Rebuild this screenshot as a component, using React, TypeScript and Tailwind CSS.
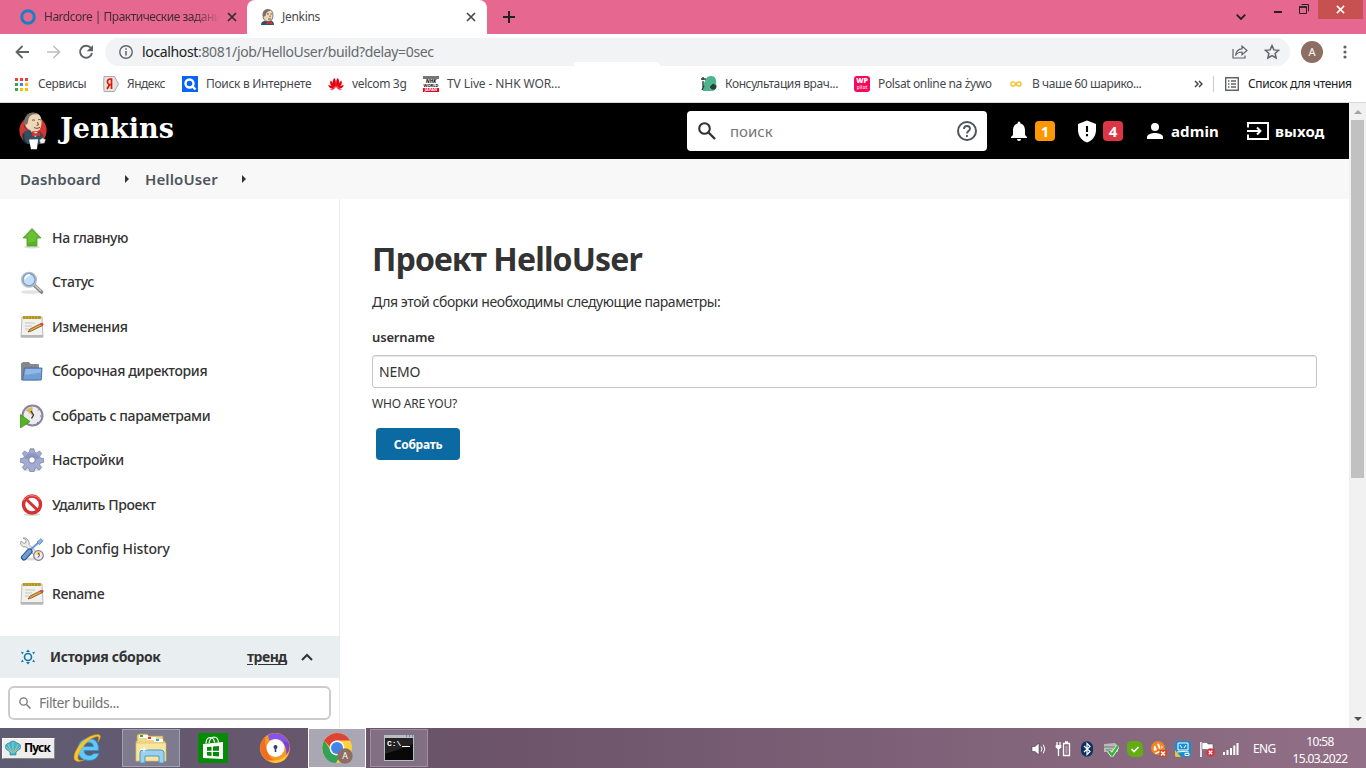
import React from "react";

type P = { className?: string };

const Butler = ({ className = "" }: P) => (
  <svg viewBox="0 0 28 38" className={className}>
    <ellipse cx="14" cy="18.500" rx="13.600" ry="14" fill="#d33833" />
    <path d="M6 12C5 6 8 1 14 .8c6-.3 9 4 8.500 10-.4 6-2 8.500-6 8.500-6 .5-9.500-3-10.500-7.300Z" fill="#f0d6b7" />
    <path d="M5.500 13C4 6 8 1 13 .7c3 0 5 .6 6.500 1.800-3-.6-6-.5-8 1.200-2.500 2-2 5-3 8-1 1-2 1-3 1.300Z" fill="#77706b" />
    <path d="M5.500 13c0 3 1 4 3 4" stroke="#443a35" strokeWidth=".8" fill="none" />
    <path d="M13 8.500c1-.8 2-.8 3 0M19 8c1-.7 2-.6 2.800 0M18.500 10l1 3-2 .3M15 15.500c2 1.200 4 1 6-.2" stroke="#4b3b31" strokeWidth=".9" fill="none" />
    <path d="M5 19.500 10 17.500l5 4 6-2 3 3 .5 7-5 3-12-1L4 26Z" fill="#335061" />
    <path d="m11.500 18.500 3 2 4-.5.5 3-3 2Z" fill="#fff" />
    <path d="m13 20 3.500 1.700L21 20l.5 4.500-5-1.200-4 1.700Z" fill="#d33833" stroke="#7c211e" strokeWidth=".5" />
    <path d="M4.500 21.500Q3.500 27 7 31" stroke="#1d3440" strokeWidth="1.800" fill="none" />
    <path d="m10 27.500 9-.3-1 10h-6Z" fill="#fff" />
    <path d="m20.500 28 3-2 3 1.500-1 3.500-4 .7Z" fill="#eee" stroke="#777" strokeWidth=".5" />
  </svg>
);

const Cross = ({ className = "" }: P) => (
  <svg viewBox="0 0 10 10" className={className}>
    <path d="m1 1 8 8M9 1 1 9" stroke="currentColor" strokeWidth="1.700" fill="none" />
  </svg>
);

function TabStrip() {
  return (
    <div className="flex h-[34px] bg-[#e66891] text-[12px] leading-4 text-[#2f2a2d]">
      <div className="flex h-[34px] w-[247px] shrink-0 items-center pl-5">
        <svg viewBox="0 0 16 16" className="size-4 shrink-0">
          <circle cx="8" cy="8" r="6.300" fill="none" stroke="#1680c3" strokeWidth="3" />
        </svg>
        <span className="ml-2 w-[176px] whitespace-nowrap bg-linear-to-r from-[#402a34] from-85% to-[#e66891] bg-clip-text tracking-[-0.5px] text-transparent">
          Hardcore | Практические задани
        </span>
        <Cross className="ml-[7px] size-[10px]" />
      </div>
      <div className="flex w-[240px] shrink-0 items-center rounded-t-lg bg-white pl-[13px]">
        <svg viewBox="0 0 16 16" className="h-4 w-4 shrink-0">
          <path d="M1 16q0-4 4-4l5-1q4 1 4 5Z" fill="#335061" />
          <path d="M3 6q0-5.500 5-5.500T13 6q0 6.500-5 6.500T3 6Z" fill="#f0d6b7" stroke="#5c5048" strokeWidth=".7" />
          <path d="M3 8Q1.500 1 7.500.5q2 0 3.500 1Q6 2 5.500 7Z" fill="#77706b" />
          <path d="M7 5h2M10.500 5H12M10 6.500v1.500M8 10h3" stroke="#4b3b31" strokeWidth=".8" />
          <path d="m6.500 12.500 2.500 1 3-1v3l-3-1-2.500 1Z" fill="#d33833" />
        </svg>
        <span className="ml-[6px] w-[184px] tracking-[-0.3px] text-[#45484c]">Jenkins</span>
        <Cross className="size-[10px] text-[#45484c]" />
      </div>
      <div className="flex flex-1 items-start">
        <svg viewBox="0 0 12 12" className="ml-4 mt-[11px] size-3">
          <path d="M6 0v12M0 6h12" stroke="#222" strokeWidth="2" />
        </svg>
        <svg viewBox="0 0 10 6" className="ml-[721px] mt-[14px] h-[6px] w-[10px]">
          <path d="m.7.7 4.300 4.300L9.300.7" stroke="#222" strokeWidth="1.800" fill="none" />
        </svg>
        <svg viewBox="0 0 8 3" className="ml-[28px] mt-[11px] h-[3px] w-2">
          <path d="M0 0h8v2H0z" fill="#222" />
        </svg>
        <svg viewBox="0 0 10 10" className="ml-[17px] mt-1 size-[10px]">
          <path d="M.5 3h7v6.500h-7zM2.500.5h7v7" stroke="#222" fill="none" />
          <path d="M0 3h8" stroke="#222" strokeWidth="1.600" />
        </svg>
        <div className="ml-[9px] flex h-[19px] w-[45px] items-center justify-center bg-[#c75050] text-white">
          <Cross className="size-[9px]" />
        </div>
      </div>
    </div>
  );
}

function Toolbar() {
  return (
    <div className="flex h-[35px] items-center pt-px">
      <svg viewBox="0 0 14 14" className="ml-[15px] size-[14px]">
        <path d="M14 7H1.500M7.500 1l-6 6 6 6" stroke="#5f6368" strokeWidth="1.800" fill="none" />
      </svg>
      <svg viewBox="0 0 14 14" className="ml-[18px] size-[14px]">
        <path d="M0 7h12.500M6.500 1l6 6-6 6" stroke="#bcbec1" strokeWidth="1.600" fill="none" />
      </svg>
      <svg viewBox="0 0 16 16" className="ml-[17px] size-4">
        <path d="M13 4.300A6 6 0 1 0 14 9" stroke="#5f6368" strokeWidth="1.900" fill="none" />
        <path d="M15 1v6.300H8.700Z" fill="#5f6368" />
      </svg>
      <div className="relative ml-[11px] flex h-7 w-[1185px] items-center rounded-full bg-[#f1f3f4] pl-[14px]">
        <svg viewBox="0 0 14 14" className="size-[14px]">
          <circle cx="7" cy="7" r="6.200" stroke="#5f6368" strokeWidth="1.400" fill="none" />
          <path d="M7 6v4.500M7 3.300v1.500" stroke="#5f6368" strokeWidth="1.500" />
        </svg>
        <span className="ml-[9px] w-[1090px] whitespace-nowrap text-[14px] leading-5 tracking-[-0.35px] text-[#676a6e]">
          <span className="text-[#202124]">localhost</span>:8081/job/HelloUser/build?delay=0sec
        </span>
        <svg viewBox="0 0 16 16" className="size-4">
          <path d="M1 5v9h12v-2.500M3.500 11.500C4 7 6 5 10 4.800V2l5 4.500-5 4.300V8C7 8 5 9 3.500 11.500Z" stroke="#5f6368" strokeWidth="1.200" fill="none" />
        </svg>
        <svg viewBox="0 0 16 16" className="ml-4 size-4">
          <path d="m8 1.600 1.900 4.300 4.700.4-3.500 3.100 1 4.600L8 11.600 3.900 14l1-4.600-3.500-3.100 4.700-.4Z" stroke="#5f6368" strokeWidth="1.500" fill="none" />
        </svg>
        <div className="absolute bottom-0 left-[469px] h-1 w-[86px] rounded-tr-full bg-white" />
      </div>
      <div className="ml-[11px] flex size-[22px] items-center justify-center rounded-full bg-[#8d6e63] text-[11px] text-white">A</div>
      <svg viewBox="0 0 4 16" className="ml-[20px] h-4 w-1">
        <circle cx="2" cy="3" r="1.600" fill="#5f6368" />
        <circle cx="2" cy="8" r="1.600" fill="#5f6368" />
        <circle cx="2" cy="13" r="1.600" fill="#5f6368" />
      </svg>
    </div>
  );
}

function Bookmarks() {
  const colors = ["#ea4335", "#ea4335", "#ea4335", "#34a853", "#4285f4", "#fbbc05", "#34a853", "#fbbc05", "#fbbc05"];
  return (
    <div className="flex h-[34px] items-center whitespace-nowrap border-b border-[#d5d7d9] pb-[3px] text-[12px] text-[#45484d]">
      <div className="flex w-[103px] items-center pl-[15px]">
        <svg viewBox="0 0 13 13" className="mr-[10px] size-[13px]">
          {colors.map((c, i) => (
            <rect key={i} x={(i % 3) * 5} y={Math.floor(i / 3) * 5} width="3" height="3" fill={c} />
          ))}
        </svg>
        <span className="tracking-[-0.35px]">Сервисы</span>
      </div>
      <div className="flex w-[79px] items-center">
        <svg viewBox="0 0 16 16" className="mr-2 size-4">
          <path d="M1 .5h10.500L15.500 8l-4 7.500H1q-.7-7.500 0-15Z" fill="#e5e5e5" stroke="#aaa" />
          <path d="M8.500 13V3H7Q4.500 3 4.500 6q0 2 2 2.700L4 13M8.500 8.700h-2" stroke="#e61400" strokeWidth="1.700" fill="none" />
        </svg>
        <span className="tracking-[-0.5px]">Яндекс</span>
      </div>
      <div className="flex w-[146px] items-center">
        <svg viewBox="0 0 16 16" className="mr-2 size-4">
          <path d="M0 0h16v16H0z" fill="#0b63f6" />
          <circle cx="7.500" cy="7.500" r="4" fill="none" stroke="#fff" strokeWidth="2.400" />
          <path d="m10.500 10.500 3 3" stroke="#fff" strokeWidth="2.400" />
        </svg>
        <span className="tracking-[-0.3px]">Поиск в Интернете</span>
      </div>
      <div className="flex w-[95px] items-center">
        <svg viewBox="0 0 16 16" className="mr-2 size-4" fill="#e60012">
          <path d="M7.700 12C4 7 4 4 6.700 2q1.800 3 1 10ZM8.300 12C12 7 12 4 9.300 2q-1.800 3-1 10ZM7 12.500C2 10 1.500 7 2.700 4.500Q5.800 7 7 12.500ZM9 12.500c5-2.500 5.500-5.500 4.300-8Q10.200 7 9 12.500ZM6.700 13Q1 13 .2 8.700q4 .8 6.500 4.300ZM9.300 13q5.700 0 6.500-4.300-4 .8-6.500 4.300ZM6.500 13.500q-3 1.500-4.800 0ZM9.500 13.500q3 1.500 4.800 0Z" />
        </svg>
        <span className="tracking-[-0.35px]">velcom 3g</span>
      </div>
      <div className="flex w-[278px] items-center">
        <div className="mr-2 flex size-4 flex-col overflow-hidden text-center text-[4px] font-bold leading-[4px]">
          <span className="h-[3px] bg-[#777]" />
          <span className="h-[5px] text-[5px] italic leading-[5px] text-black">NHK</span>
          <span className="h-1 text-black">WORLD</span>
          <span className="h-1 bg-[#e60022] text-white">JAPAN</span>
        </div>
        <span className="tracking-[-0.1px]">TV Live - NHK WOR...</span>
      </div>
      <div className="flex w-[153px] items-center">
        <svg viewBox="0 0 16 16" className="mr-2 size-4">
          <path d="M5 3q1-3 5-3 6 0 5 8 2 5-3 7H2Q1 9 5 3Z" fill="#4cb58e" />
          <path d="M2 1v3M0 3h5M2 5v7M1 14l2-4" stroke="#28423a" strokeWidth="1.400" />
          <path d="M9 11l3-3 3 2-1 3h-3Z" fill="#28423a" stroke="#28423a" />
        </svg>
        <span className="tracking-[-0.38px]">Консультация врач...</span>
      </div>
      <div className="flex w-[154px] items-center">
        <div className="mr-2 flex size-4 flex-col items-center justify-center rounded-[3px] bg-[#f5095c] text-white">
          <span className="text-[7px] font-black leading-[6px]">WP</span>
          <span className="text-[5px] leading-[6px]">pilot</span>
        </div>
        <span className="tracking-[-0.37px]">Polsat online na żywo</span>
      </div>
      <div className="flex w-[186px] items-center">
        <svg viewBox="0 0 16 16" className="mr-2 size-4">
          <path d="M8 8Q6 5.500 4.500 5.800 3 6 3 8t1.500 2.200Q6 10.500 8 8q2-2.500 3.500-2.200Q13 6 13 8t-1.500 2.200Q10 10.500 8 8Z" stroke="#f4c430" strokeWidth="1.600" fill="none" />
        </svg>
        <span className="tracking-[-0.4px]">В чаше 60 шарико...</span>
      </div>
      <svg viewBox="0 0 9 8" className="h-2 w-[9px]">
        <path d="m1 1 3 3-3 3M5 1l3 3-3 3" stroke="#45484d" strokeWidth="1.500" fill="none" />
      </svg>
      <div className="ml-[10px] h-4 w-px bg-[#c8cacc]" />
      <svg viewBox="0 0 14 14" className="ml-[11px] size-[14px]">
        <path d="M.7.700h12.600v12.600H.7zM3 4h1.500M6 4h5M3 7h1.500M6 7h5M3 10h1.500M6 10h5" stroke="#5f6368" strokeWidth="1.400" fill="none" />
      </svg>
      <span className="ml-[9px] tracking-[-0.4px] text-[#202124]">Список для чтения</span>
    </div>
  );
}

function Header() {
  return (
    <header className="flex h-14 items-center bg-black text-white">
      <Butler className="ml-[19px] h-[38px] w-7" />
      <span className="ml-[13px] w-[627px] -translate-y-[2px] font-['DejaVu_Serif',serif] text-[27px] font-bold tracking-[0.1px]">Jenkins</span>
      <div className="flex h-10 w-[300px] items-center rounded-[4px] bg-white">
        <svg viewBox="0 0 18 18" className="ml-[11px] size-[18px]">
          <circle cx="6.500" cy="6.500" r="5.300" stroke="#333" strokeWidth="2.100" fill="none" />
          <path d="m10.500 10.500 6.500 6.500" stroke="#333" strokeWidth="2.400" />
        </svg>
        <span className="ml-[14px] w-[227px] text-[15px] text-[#757575]">поиск</span>
        <svg viewBox="0 0 20 20" className="size-5">
          <circle cx="10" cy="10" r="9" stroke="#4d545d" strokeWidth="2" fill="none" />
          <path d="M7 8q0-3 3-3t3 2.700C13 10 10 10 10 12.500M10 14v2" stroke="#4d545d" strokeWidth="1.800" fill="none" />
        </svg>
      </div>
      <svg viewBox="0 0 18 20" className="ml-[23px] h-5 w-[18px]" fill="#fff">
        <path d="M9 20q2 0 2-2H7q0 2 2 2ZM15 14V9c0-3.200-1.700-5.700-4.600-6.400V2Q10.400.5 9 .5T7.600 2v.6C4.700 3.300 3 5.800 3 9v5l-2 2v1h16v-1Z" />
      </svg>
      <span className="ml-[7px] flex h-5 w-5 items-center justify-center rounded-[4px] bg-[#fe9700] text-[15px] font-bold">1</span>
      <svg viewBox="0 0 20 23" className="ml-[22px] h-[23px] w-5">
        <path d="M10 .5 1 4v6c0 6 4 11 9 12.500 5-1.500 9-6.500 9-12.500V4Z" fill="#fff" />
        <path d="M10 6v6M10 14v2.200" stroke="#000" strokeWidth="2.100" />
      </svg>
      <span className="ml-[6px] flex h-5 w-5 items-center justify-center rounded-[4px] bg-[#dc3545] text-[15px] font-bold">4</span>
      <svg viewBox="0 0 16 16" className="ml-6 size-4" fill="#fff">
        <circle cx="8" cy="4" r="4" />
        <path d="M0 16v-2c0-2.700 5.300-4 8-4s8 1.300 8 4v2Z" />
      </svg>
      <span className="ml-2 w-[76px] text-[15px] font-bold tracking-[0.1px]">admin</span>
      <svg viewBox="0 0 22 18" className="h-[18px] w-[22px]">
        <path d="M1 5.500V1h20v16H1v-4.500M0 9h13M10 5.500 13.500 9 10 12.500" stroke="#fff" strokeWidth="1.900" fill="none" />
      </svg>
      <span className="ml-[6px] text-[15px] font-bold tracking-[0.1px]">выход</span>
    </header>
  );
}

const Notepad = () => (
  <>
    <path d="M2 2h20l1 20H1Z" fill="#f1f1ee" stroke="#aaa" strokeWidth=".8" />
    <path d="M1 20h22v2.500H1Z" fill="#b7b7b5" />
    <path d="M3 1h18v3H3Z" fill="#c8a832" />
    <path d="M4 1v3M7 1v3M10 1v3M13 1v3M16 1v3M19 1v3" stroke="#8a7015" strokeWidth=".7" />
    <path d="M5 8h10M5 11h7M5 14h4" stroke="#c5c5c5" />
    <path d="m8 17 2-3 11-5.500 1.500 2-11 5.500Z" fill="#e3a13a" stroke="#6b451c" strokeWidth=".7" />
    <path d="m20 9 2-1.300q2 .5 1.500 2l-2 1.500Z" fill="#d84444" />
  </>
);

const menu: { label: string; track: string; icon: React.ReactNode }[] = [
  {
    label: "На главную",
    track: "tracking-[-0.38px]",
    icon: (
      <>
        <ellipse cx="12" cy="21" rx="8" ry="1.500" fill="#ddd" />
        <path d="m12 2.500 9 9.500h-4v8H7v-8H3Z" fill="#55b51f" stroke="#579b35" strokeWidth=".8" />
        <path d="m12 4 6.500 7H16v4L8 17v-6H5.500Z" fill="#79c84a" opacity=".6" />
      </>
    ),
  },
  {
    label: "Статус",
    track: "tracking-[-0.35px]",
    icon: (
      <>
        <ellipse cx="11" cy="21" rx="10" ry="1.800" fill="#e2e2e2" />
        <path d="m14.500 14.500 7 6.500" stroke="#888" strokeWidth="3.600" strokeLinecap="round" />
        <path d="m15 14.500 6 5.500" stroke="#ccc" strokeWidth="1.500" />
        <circle cx="9" cy="8.700" r="7.300" fill="#b8d6f5" stroke="#bbb" strokeWidth="1.500" />
        <circle cx="9" cy="8.700" r="6" fill="#c4defa" stroke="#6f9bd0" strokeWidth="1.200" />
        <path d="M5 8q1-4 5-4" stroke="#fff" strokeWidth="2" fill="none" />
      </>
    ),
  },
  { label: "Изменения", track: "tracking-[-0.4px]", icon: <Notepad /> },
  {
    label: "Сборочная директория",
    track: "tracking-[-0.35px]",
    icon: (
      <>
        <path d="M1.500 20V3.500L3 2.500h6l1.500 2h8V20Z" fill="#85878a" stroke="#666" strokeWidth=".6" />
        <path d="M4.500 8H22l-.7 12H2.500Z" fill="#6f9fd5" stroke="#3f6ea8" strokeWidth=".9" />
        <path d="M5.500 9H21l-.2 3.500L5 15Z" fill="#91b8e3" />
      </>
    ),
  },
  {
    label: "Собрать с параметрами",
    track: "tracking-[-0.38px]",
    icon: (
      <>
        <circle cx="12.500" cy="11.500" r="10" fill="#ecebef" stroke="#8884a0" strokeWidth="2" />
        <path d="M12.500 11.500 6 6.500q2-3 6.500-3.500Z" fill="#d7b955" />
        <path d="m11 7 2.500 4-2 3.500" stroke="#333" strokeWidth="1.300" fill="none" />
        <path d="M18 6.500 19.500 5M20 12h1.500M17 18l1.500 1.500" stroke="#777" />
        <path d="M.5 10.500 10 17.500.5 24Z" fill="#53b51f" stroke="#358515" strokeWidth=".7" />
      </>
    ),
  },
  {
    label: "Настройки",
    track: "tracking-[-0.35px]",
    icon: (
      <>
        <ellipse cx="12" cy="22" rx="9" ry="1.300" fill="#ddd" />
        <path
          d="m10 .8 4 0 .7 3.400 1.700.8 3-2 2.300 2.300-2 3 .8 1.700 3.400.7v3.500l-3.400.7-.8 1.800 2 2.800-2.400 2.500-2.900-2-1.700.7-.7 3.200h-4l-.7-3.200-1.700-.7-2.900 2-2.400-2.500 2-2.800-.8-1.800-3.400-.7v-3.500l3.400-.7.8-1.700-2-3L4.600 3l3 2 1.700-.8Z"
          fill="#a3abd0"
          stroke="#767ea5"
          strokeWidth=".7"
        />
        <path d="M5 8q7-6 14 0v3H5Z" fill="#7586b1" opacity=".5" />
        <circle cx="12" cy="12" r="3.300" fill="#fff" stroke="#767da5" />
      </>
    ),
  },
  {
    label: "Удалить Проект",
    track: "tracking-[-0.4px]",
    icon: (
      <>
        <ellipse cx="12" cy="21.500" rx="8" ry="1.500" fill="#d5d5d5" />
        <circle cx="12" cy="11.500" r="8.500" fill="#fff" stroke="#d63232" strokeWidth="3.400" />
        <path d="m6.500 6.500 11 10.500" stroke="#d63232" strokeWidth="3" />
        <path d="M3.500 8q2-5 8.500-5.500 5 0 8 4" stroke="#f08080" fill="none" />
      </>
    ),
  },
  {
    label: "Job Config History",
    track: "tracking-[-0.15px]",
    icon: (
      <>
        <ellipse cx="11" cy="22" rx="9" ry="1.500" fill="#ddd" />
        <path d="M3 1q3-1 5 2t1 4.500l9 9-2.500 3-9-9.500q-4 1-6-3L1 4l3 2.500 2-1V3Z" fill="#ececec" stroke="#888" strokeWidth=".8" />
        <path d="m9 14 9-8" stroke="#6a98d4" strokeWidth="2" />
        <path d="m17 5 4-3.300 2 2-3.500 4Z" fill="#8fb5e6" stroke="#4572ad" strokeWidth=".7" />
        <path d="M4 20.500 9.500 14.500" stroke="#254f87" strokeWidth="6" strokeLinecap="round" />
        <path d="M4 20.300 9.500 14.300" stroke="#6d9cd8" strokeWidth="4" strokeLinecap="round" />
        <circle cx="18.500" cy="18.500" r="4.800" fill="#efedf3" stroke="#8b7596" strokeWidth="1.200" />
        <path d="m18.500 18.500-3-2 3-2 2 1Z" fill="#f0d020" />
        <path d="m18.500 16 1 2.500-1.500 2" stroke="#444" fill="none" />
      </>
    ),
  },
  { label: "Rename", track: "tracking-[-0.45px]", icon: <Notepad /> },
];

function Sidebar() {
  return (
    <aside className="flex w-[340px] shrink-0 flex-col border-r border-[#e9ebed] pt-[17px]">
      <nav className="flex h-[420px] flex-col">
        {menu.map((m) => (
          <div key={m.label} className="flex h-[44.450px] items-center pl-5 text-[14px] font-medium text-[#333]">
            <svg viewBox="0 0 24 24" className="mr-2 size-6 shrink-0">
              {m.icon}
            </svg>
            <span className={"pb-[1.400px] " + m.track}>{m.label}</span>
          </div>
        ))}
      </nav>
      <div className="flex h-[42px] items-center bg-[#e9eef1] text-[14px] font-bold text-[#333]">
        <svg viewBox="0 0 16 16" className="ml-5 size-4">
          <circle cx="8" cy="8" r="3.500" stroke="#1372a6" strokeWidth="1.600" fill="none" />
          <path d="M6 2.900 8 .5l2 2.400M6 13.100l2 2.400 2-2.400M1 2.800l2.800.4-1.500 2.300M15 2.800l-2.800.4 1.500 2.300M1 13.200l2.800-.4-1.500-2.300M15 13.200l-2.800-.4 1.500-2.300" fill="#1372a6" />
        </svg>
        <span className="ml-[14px] w-[197px] pb-[2px] tracking-[-0.35px]">История сборок</span>
        <span className="w-[41px] pb-[2px] tracking-[-0.5px] underline underline-offset-2">тренд</span>
        <svg viewBox="0 0 12 8" className="ml-[13px] h-2 w-3">
          <path d="m1 7 5-5 5 5" stroke="#333" strokeWidth="2" fill="none" />
        </svg>
      </div>
      <div className="ml-2 mt-2 flex h-[34px] w-[323px] items-center rounded-[6px] border-2 border-[#ccc] text-[14px] text-[#757575]">
        <svg viewBox="0 0 12 12" className="ml-[9px] size-3">
          <circle cx="4.500" cy="4.500" r="3.700" stroke="#777" strokeWidth="1.300" fill="none" />
          <path d="m7.500 7.500 4 4" stroke="#777" strokeWidth="1.500" />
        </svg>
        <span className="ml-2 pb-[2px] tracking-[-0.5px]">Filter builds...</span>
      </div>
    </aside>
  );
}

function Content() {
  return (
    <main className="flex flex-1 flex-col pl-8 text-[14px] text-[#333]">
      <h1 className="mt-[36px] h-12 text-[32px] font-bold leading-[48px] tracking-[-0.87px]">Проект HelloUser</h1>
      <p className="mt-[9px] h-5 leading-5 tracking-[-0.43px]">Для этой сборки необходимы следующие параметры:</p>
      <label className="mt-[15px] h-5 text-[13px] font-semibold leading-5 tracking-[-0.15px]">username</label>
      <div className="mt-[8px] flex h-[33px] w-[945px] items-center rounded-[3px] border border-[#c6c6c6] pl-[6px] tracking-[-0.2px] shadow-[inset_0_1px_1px_#e5e5e5]">
        NEMO
      </div>
      <span className="mt-[6px] h-5 text-[12px] leading-5 tracking-[-0.2px]">WHO ARE YOU?</span>
      <button className="ml-1 mt-[14px] h-8 w-[84px] rounded-[4px] bg-[#0b6aa2] pt-px text-[12px] font-bold tracking-[-0.3px] text-white">Собрать</button>
    </main>
  );
}

function Taskbar() {
  return (
    <footer className="flex h-10 items-center bg-linear-to-r from-[#5e5c72] via-[#6b5369] via-35% to-[#927087] text-white">
      <div className="ml-[2px] flex h-[21px] w-[53px] items-center border border-white border-b-[#888] border-r-[#888] bg-[#efeeec] pl-[2px] text-[12px] font-bold text-black">
        <svg viewBox="0 0 16 16" className="mr-[3px] size-4 shrink-0">
          <path d="M8 15H5v-3L1 9q-2-5 3-6 4-4 8 0 5 1 3 6l-4 3v3Z" fill="#39b9d5" stroke="#26768c" strokeWidth=".6" />
          <path d="M8 13V2M7 13 3 4M9 13l4-9M6 12 1 7M10 12l5-5" stroke="#d9c18a" strokeWidth=".8" />
        </svg>
        <span className="tracking-[-0.8px]">Пуск</span>
      </div>
      <svg viewBox="0 0 32 32" className="ml-[18px] size-8">
        <path d="M25.500 18.500H11q.5 5 5.500 5 3 0 4.200-2H26q-2.500 7-10 7Q5 28 5 17.500T16 6.500q10 0 9.500 12ZM11 14.500h9.500Q20 10.500 16 10.500t-5 4Z" fill="#60c9f7" stroke="#2a91d3" strokeWidth=".8" />
        <path d="M25 10Q31 1 22 2.800 12 5 5 15-3 28 5 29.500q3 .3 7-2-6 2-7-.5Q4 23 10 14.500T24 4.500q3-.5 1 5.500Z" fill="#f8c62c" stroke="#d99c12" strokeWidth=".5" />
      </svg>
      <div className="ml-[17px] flex h-[38px] w-[58px] items-center justify-center border border-[#a3a1af] bg-[#7d7b8d]">
        <svg viewBox="0 0 34 32" className="h-8 w-[34px]">
          <path d="M3 4q0-2 2-2h8l2 2h14v5h2l1 20H2V9h1Z" fill="#efd886" stroke="#b99846" strokeWidth=".7" />
          <path d="M5 3h9v3H5ZM13 5h9v3h-9ZM20 7h9v3h-9Z" fill="#fff" />
          <path d="M6 3h3v2H6Z" fill="#28a745" />
          <path d="M14 5h3v2h-3Z" fill="#d33" />
          <path d="M22 7h3v2h-3Z" fill="#29a9d8" />
          <path d="M2 11h30v18H2Z" fill="#f7e5a0" stroke="#d4ba68" strokeWidth=".6" />
          <path d="M6 31V21q0-3 3-3h18q3 0 3 3v10h-5v-7H11v7Z" fill="#9bd0ee" stroke="#4d98c4" />
          <path d="m10 13 .7 3.500 3.300.7-3.300.8-.7 3.500-.7-3.500-3.500-.8 3.500-.7Z" fill="#fff" />
        </svg>
      </div>
      <svg viewBox="0 0 30 30" className="ml-[18px] size-[30px]">
        <path d="M0 0h30v30H0z" fill="#068b06" />
        <path d="m5 11 20-2v17L5 25Z" fill="#fff" />
        <path d="M8 10.500Q8 5 12 4.500q4 0 4.500 5M11 10q1-5.500 5-6 4 0 4.500 5.500" stroke="#fff" strokeWidth="1.200" fill="none" />
        <path d="m9 14 4.500-.3v4H9ZM15 13.500l6-.4v4.600h-6ZM9 19h4.500v4L9 22.600ZM15 19h6v4.600l-6-.5Z" fill="#068b06" />
      </svg>
      <svg viewBox="0 0 30 30" className="ml-8 size-[30px]">
        <circle cx="15" cy="15" r="15" fill="#f59a25" />
        <path d="M10 1Q25-2 29.500 12 30 18 26 24 29 8 10 1Z" fill="#7442df" />
        <path d="M8 2q15-5 20 8-8-5-19-3Z" fill="#8554ef" />
        <path d="M5 4Q-3 13 3 23q6 8 15 6Q5 25 5 4Z" fill="#f36c21" />
        <path d="M29 18q-2 11-13 12-5 0-8-3 15 3 21-9Z" fill="#ffc533" />
        <circle cx="15.500" cy="15" r="9" fill="#fff" />
        <circle cx="15.500" cy="14" r="2" fill="#3c3b60" />
        <path d="M14.700 14h1.600v5h-1.600z" fill="#3c3b60" />
      </svg>
      <div className="ml-[18px] flex h-[40px] w-[58px] items-center justify-center border border-white bg-[#a9a7b3]">
        <svg viewBox="0 0 32 32" className="size-8">
          <circle cx="16" cy="16" r="15" fill="#fdd13f" />
          <path d="M3 8.500Q8 1 16 1q9 0 13 7.500H16Q10 9 9 15Z" fill="#dc4437" />
          <path d="M3 8.500Q-1 17 4 25q4 6 11 6l6-10q-8 4-12-4Z" fill="#33a156" />
          <circle cx="16" cy="16" r="7.500" fill="#fff" />
          <circle cx="16" cy="16" r="6" fill="#4285e8" />
          <circle cx="24" cy="24" r="7.700" fill="#8d6e63" />
          <text x="24" y="27.200" textAnchor="middle" fontSize="9" fill="#fff" fontFamily="Open Sans">A</text>
        </svg>
      </div>
      <div className="ml-1 flex h-[38px] w-[58px] items-center justify-center border border-[#a08da0] bg-[#817084]">
        <svg viewBox="0 0 30 26" className="h-[26px] w-[30px]">
          <path d="M0 0h30v26H0z" fill="#b9bec3" />
          <path d="M1 3h28v22H1z" fill="#080808" />
          <path d="M1 19Q20 13 29 9V3H1Z" fill="#222" />
          <path d="M22 1h1M25 1h1M28 1h1" stroke="#334f80" />
          <text x="3" y="11" fontSize="8" fontWeight="bold" fill="#fff" fontFamily="Liberation Mono">C:\</text>
          <path d="M18 11.500h8" stroke="#fff" />
        </svg>
      </div>
      <div className="ml-[603px] mt-[2px] flex h-6 items-center">
        <svg viewBox="0 0 16 16" className="size-4">
          <path d="M1 5.500h3L8 2v12l-4-3.500H1Z" fill="#fff" stroke="#443c45" strokeWidth=".6" />
          <path d="M10 5.500q2 2.500 0 5M12.300 3.700q3 4.300 0 8.600" stroke="#fff" fill="none" />
        </svg>
        <svg viewBox="0 0 16 16" className="ml-2 size-4" fill="none" stroke="#fff" strokeWidth="1.300">
          <path d="M2 1v3M5 1v3M3.500 8v7M8.500 2.500h6v12h-6ZM10 1h3" />
          <path d="M.7 4h5.600v2.500L4.500 8h-2L.7 6.500Z" fill="#fff" stroke="none" />
          <path d="M10.500 5v7.500h2V5Z" fill="#fff" stroke="none" opacity=".35" />
        </svg>
        <svg viewBox="0 0 16 16" className="ml-2 size-4">
          <rect x="2" y=".3" width="12" height="15.400" rx="6" fill="#0a315f" />
          <path d="m5 5 6 5.500L8 13.500v-11l3 3L5 11" stroke="#fff" strokeWidth="1.200" fill="none" />
        </svg>
        <svg viewBox="0 0 16 16" className="ml-2 size-4">
          <path d="m1 3 11-1 3 3v6H1Z" fill="#b8bab8" />
          <path d="M1 6h13M3 9h6" stroke="#777" />
          <path d="m6 10 3 4 6-9" stroke="#fff" strokeWidth="4" fill="none" />
          <path d="m6 10 3 4 6-9" stroke="#35b835" strokeWidth="2.600" fill="none" />
        </svg>
        <svg viewBox="0 0 16 16" className="ml-2 size-4">
          <path d="M4 0h6q6 1 6 7v6q-1 3-4 3H6q-6-1-6-7V3q1-3 4-3Z" fill="#62ad12" />
          <path d="m4.500 8 2.500 2.500L11.500 6" stroke="#fff" strokeWidth="1.600" fill="none" />
        </svg>
        <svg viewBox="0 0 16 16" className="ml-2 size-4">
          <circle cx="7" cy="7" r="7" fill="#f58220" />
          <path d="M3 10Q2 6 4 4l2 5ZM6 3l2-.5 1.500 5-1.500.5ZM10 4.500l2 1.500-1.500 2ZM3.500 12l6-2.500v1.500L5 13Z" fill="#fff" />
          <path d="M8.500 9H16v7H8.500z" fill="#d9471c" />
          <path d="m10 10.500 4 4M14 10.500l-4 4" stroke="#fff" strokeWidth="1.500" />
        </svg>
        <svg viewBox="0 0 16 16" className="ml-2 size-4">
          <rect width="16" height="16" rx="2" fill="#188ed0" />
          <path d="M3 2h10v7H3ZM2 11q6-1 12 0M5 4l2 3M11 4 9 7M10 12.500h4v2h-4z" stroke="#fff" fill="none" />
          <path d="M0 15V9l6 7H1Z" fill="#e3c53c" />
        </svg>
        <svg viewBox="0 0 16 16" className="ml-2 size-4">
          <path d="M2 1v15" stroke="#fff" strokeWidth="1.600" />
          <path d="M3 1.500h5l1 1.500h5v7H9L8 8.500H3Z" fill="#fff" stroke="#4e424d" strokeWidth=".5" />
          <circle cx="11.500" cy="11.500" r="4.300" fill="#d93535" />
          <path d="m9.800 9.800 3.400 3.400M13.200 9.800l-3.400 3.400" stroke="#fff" strokeWidth="1.300" />
        </svg>
        <svg viewBox="0 0 16 16" className="ml-2 size-4" fill="#fff">
          <path d="M0 11h2v3H0ZM3.500 9h2v5h-2ZM7 7h2v7H7ZM10.300 4.500h2V14h-2ZM13.500 2h2v12h-2Z" />
        </svg>
        <span className="ml-[14px] w-[24px] text-[12px] tracking-[-0.6px]">ENG</span>
      </div>
      <div className="ml-[15px] w-[56px] whitespace-nowrap pt-[3px] text-center text-[12px] leading-[17px] tracking-[-0.65px]">
        10:58
        <br />
        15.03.2022
      </div>
    </footer>
  );
}

export default function App() {
  return (
    <div className="flex h-[768px] w-[1366px] flex-col overflow-hidden bg-white font-['Noto_Sans','Open_Sans',sans-serif]">
      <div className="shrink-0">
        <TabStrip />
        <Toolbar />
        <Bookmarks />
      </div>
      <div className="flex h-[625px] shrink-0">
        <div className="flex w-[1349px] flex-col">
          <Header />
          <div className="flex h-10 shrink-0 items-center bg-[#f8f8f8] pl-5 text-[15px] font-semibold tracking-[0.12px] text-[#4d545d]">
            <span className="w-[105px]">Dashboard</span>
            <svg viewBox="0 0 4 8" className="h-2 w-1">
              <path d="m0 0 4 4-4 4Z" fill="#333" />
            </svg>
            <span className="ml-4 w-[97px]">HelloUser</span>
            <svg viewBox="0 0 4 8" className="h-2 w-1">
              <path d="m0 0 4 4-4 4Z" fill="#333" />
            </svg>
          </div>
          <div className="flex h-[529px] overflow-hidden">
            <Sidebar />
            <Content />
          </div>
        </div>
        <div className="flex w-[17px] flex-col items-center bg-[#f1f1f1]">
          <svg viewBox="0 0 8 4" className="mt-[7px] h-1 w-2">
            <path d="m0 4 4-4 4 4Z" fill="#a3a3a3" />
          </svg>
          <div className="mt-[6px] h-[358px] w-[13px] bg-[#c1c1c1]" />
          <svg viewBox="0 0 8 4" className="mb-[7px] mt-auto h-1 w-2">
            <path d="m0 0 4 4 4-4Z" fill="#505050" />
          </svg>
        </div>
      </div>
      <Taskbar />
    </div>
  );
}
